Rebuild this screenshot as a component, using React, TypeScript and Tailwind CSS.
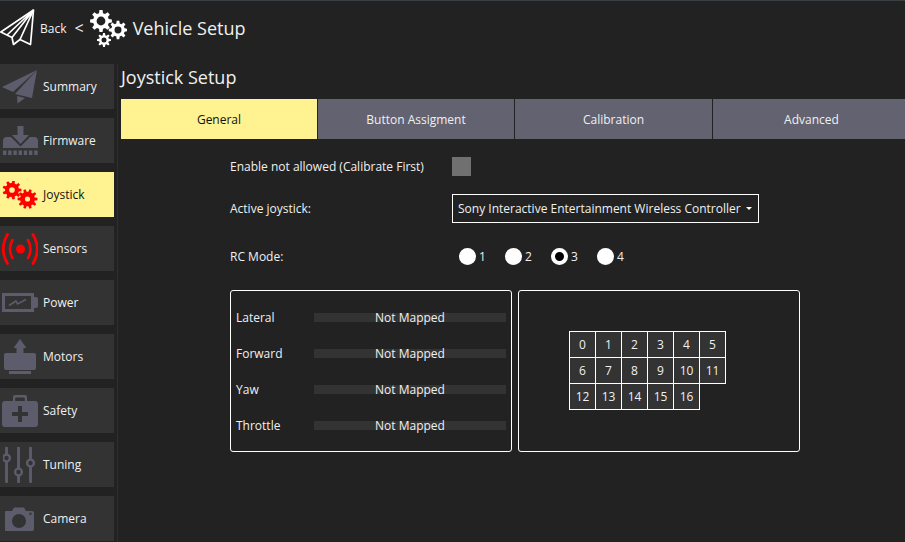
import { ReactNode } from "react";

const SLATE = "#5c5c6c";

function gearPath(cx: number, cy: number, outer: number, inner: number, teeth: number, hole: number) {
    const pts: string[] = [];
    const step = (Math.PI * 2) / teeth;
    for (let i = 0; i < teeth; i++) {
        const a = i * step;
        const corners: [number, number][] = [
            [inner, a - step * 0.32],
            [outer, a - step * 0.18],
            [outer, a + step * 0.18],
            [inner, a + step * 0.32],
        ];
        corners.forEach(([r, t]) => pts.push(`${(cx + r * Math.cos(t)).toFixed(2)} ${(cy + r * Math.sin(t)).toFixed(2)}`));
    }
    const ring = `M${cx - hole} ${cy}a${hole} ${hole} 0 1 0 ${hole * 2} 0a${hole} ${hole} 0 1 0 ${-hole * 2} 0Z`;
    return `M${pts.join("L")}Z${ring}`;
}

function PlaneOutline() {
    return (
        <svg width="36" height="38" viewBox="0 0 36 38" fill="none" stroke="#fff" strokeWidth="1.7" strokeLinejoin="round" className="shrink-0">
            <path d="M33.5 1 L0.8 23 L12 28.5 L13.5 35.5 L20 30.5 L30.5 35.5 Z" />
            <path d="M33.5 1 L12 28.5 M33.5 1 L20 30.5 M33.5 1 L7 26" />
        </svg>
    );
}

function HeaderGears() {
    return (
        <svg width="37" height="37" viewBox="0 0 37 37" fill="#fff" fillRule="evenodd" className="shrink-0">
            <path d={gearPath(11, 11, 11, 8, 8, 4.4)} />
            <path d={gearPath(28, 20, 9.3, 6.8, 8, 3.5)} />
            <path d={gearPath(14, 30, 7, 5, 8, 2.5)} />
        </svg>
    );
}

function SummaryIcon() {
    return (
        <svg width="36" height="34" viewBox="0 0 36 34" fill={SLATE}>
            <path d="M35 0 L0 17 L11 22 Z" />
            <path d="M35 0 L13 24 L30 28 Z" />
            <path d="M15 26 L15.5 33.5 L23 28 Z" />
        </svg>
    );
}

function FirmwareIcon() {
    return (
        <svg width="36" height="30" viewBox="0 0 36 30" fill={SLATE}>
            <path d="M15.5 0 H21.5 V9 H27 L18.5 18 L10 9 H15.5 Z" />
            <path d="M1 15 Q1 11 5 11 H9 L18.5 20.5 L28 11 H32 Q36 11 36 15 V22 H1 Z" />
            {[1, 6.2, 11.4, 16.6, 21.8, 27, 32.2].map(x => (
                <rect key={x} x={x} y="24.5" width="3.4" height="4.5" />
            ))}
        </svg>
    );
}

function JoystickIcon() {
    return (
        <svg width="36" height="28" viewBox="0 0 36 28" fill="#f00" fillRule="evenodd">
            <path d={gearPath(10, 9, 9.5, 7, 9, 2.8)} />
            <path d={gearPath(25.5, 18, 10, 7.4, 10, 2.6)} />
        </svg>
    );
}

function SensorsIcon() {
    return (
        <svg width="36" height="32" viewBox="0 0 36 32" fill="none" stroke="#f00" strokeLinecap="round">
            <circle cx="18.5" cy="16" r="4.5" fill="#f00" stroke="none" />
            <path d="M10.5 7 Q5.5 16 10.5 25" strokeWidth="2.6" />
            <path d="M26 7 Q31 16 26 25" strokeWidth="2.6" />
            <path d="M5.5 1.5 Q-3 16 5.5 30.5" strokeWidth="2.8" />
            <path d="M31 1.5 Q39.5 16 31 30.5" strokeWidth="2.8" />
        </svg>
    );
}

function PowerIcon() {
    return (
        <svg width="36" height="19" viewBox="0 0 36 19" fill="none">
            <rect x="1.5" y="1.5" width="29" height="16" stroke={SLATE} strokeWidth="3" />
            <path d="M32 4 H34 Q36 4 36 6 V13 Q36 15 34 15 H32 Z" fill={SLATE} />
            <path d="M7 12.5 L14 8 L15.5 11 L24 6.5" stroke={SLATE} strokeWidth="1.6" />
        </svg>
    );
}

function MotorsIcon() {
    return (
        <svg width="34" height="36" viewBox="0 0 34 36" fill={SLATE}>
            <path d="M17 0 L23.5 9 H20.5 V15 H13.5 V9 H10.5 Z" />
            <path d="M3 14 H31 Q33 14 33 16 V29 Q33 31 31 31 H3 Q1 31 1 29 V16 Q1 14 3 14 Z" />
            <rect x="6" y="32" width="22" height="3" />
        </svg>
    );
}

function SafetyIcon() {
    return (
        <svg width="36" height="34" viewBox="0 0 36 34" fill={SLATE} fillRule="evenodd">
            <path d="M11 7 V3 Q11 1 13 1 H23 Q25 1 25 3 V7 H22.8 V3.4 H13.2 V7 Z" />
            <path d="M3 7 H33 Q36 7 36 10 V30 Q36 33 33 33 H3 Q0 33 0 30 V10 Q0 7 3 7 Z M16 12 V18 H10 V22 H16 V28 H20 V22 H26 V18 H20 V12 Z" />
        </svg>
    );
}

function TuningIcon() {
    return (
        <svg width="34" height="36" viewBox="0 0 34 36" fill="none" stroke={SLATE}>
            <path d="M3.5 0.5 V35 M15.5 0.5 V35 M27.5 0.5 V35" strokeWidth="2.8" strokeLinecap="round" />
            <circle cx="3.5" cy="11" r="3.4" fill="#333" strokeWidth="2.4" />
            <circle cx="15.5" cy="25" r="3.4" fill="#333" strokeWidth="2.4" />
            <circle cx="27.5" cy="16" r="3.4" fill="#333" strokeWidth="2.4" />
        </svg>
    );
}

function CameraIcon() {
    return (
        <svg width="30" height="24" viewBox="1 0 30 24" fill={SLATE} fillRule="evenodd">
            <path d="M2 4 H8 L10 0.5 H20 L22 4 H28 Q30 4 30 6 V22 Q30 24 28 24 H2 Q0 24 0 22 V6 Q0 4 2 4 Z M15 7 A7 7 0 1 0 15 21 A7 7 0 1 0 15 7 Z M26.5 5.5 A1.2 1.2 0 1 0 26.5 7.9 A1.2 1.2 0 1 0 26.5 5.5 Z" />
            <circle cx="15" cy="14" r="4.8" fill="#333" />
        </svg>
    );
}

function NavButton({ icon, label, active = false }: { icon: ReactNode; label: string; active?: boolean }) {
    return (
        <div className={`h-[45px] w-[114px] shrink-0 flex items-center ${active ? "bg-[#fff291] text-[#111]" : "bg-[#333333] text-[#f0f0f0]"}`}>
            <div className="w-[38px] ml-px mr-[4px] shrink-0 flex items-center justify-center">{icon}</div>
            <span className="text-[12px] leading-none pt-px">{label}</span>
        </div>
    );
}

function Tab({ label, active = false, className = "" }: { label: string; active?: boolean; className?: string }) {
    return (
        <div className={`h-10 pt-px shrink-0 flex items-center justify-center text-[12px] ${active ? "bg-[#fff291] text-[#111]" : "bg-[#626270] text-[#f0f0f0]"} ${className}`}>
            {label}
        </div>
    );
}

function Radio({ label, checked = false }: { label: string; checked?: boolean }) {
    return (
        <div className="w-[46px] flex items-center gap-[3px] text-[12px]">
            {checked ? (
                <span className="w-[17px] h-[17px] rounded-full border-[4px] border-white bg-black" />
            ) : (
                <span className="w-[17px] h-[17px] rounded-full bg-white" />
            )}
            <span className="pt-px">{label}</span>
        </div>
    );
}

function AxisRow({ label }: { label: string }) {
    return (
        <div className="h-9 flex items-center">
            <span className="w-[78px] text-[12px] pt-[2px]">{label}</span>
            <div className="relative w-[192px] h-[9px] bg-[#333333]">
                <span className="absolute inset-0 pt-px flex items-center justify-center text-[12px] whitespace-nowrap">Not Mapped</span>
            </div>
        </div>
    );
}

export default function App() {
    const buttons = Array.from({ length: 17 }, (_, i) => i);

    return (
        <div className="w-[905px] h-[542px] overflow-hidden bg-[#222222] text-[#f0f0f0] flex flex-col border-t border-[#3a3f44] font-['Open_Sans',sans-serif]">
            <header className="h-[55px] shrink-0 flex items-center pb-[1px]">
                <PlaneOutline />
                <span className="ml-[4px] text-[12px] pt-px">Back</span>
                <span className="ml-[8px] text-[16px]">&lt;</span>
                <div className="ml-[6px] mr-[6px]"><HeaderGears /></div>
                <span className="text-[18px] leading-none">Vehicle Setup</span>
            </header>

            <div className="flex flex-1 min-h-0 pt-2">
                <nav className="w-[118px] shrink-0 flex flex-col gap-[9px] border-r border-[#2e2e2e]">
                    <NavButton icon={<SummaryIcon />} label="Summary" />
                    <NavButton icon={<FirmwareIcon />} label="Firmware" />
                    <NavButton icon={<JoystickIcon />} label="Joystick" active />
                    <NavButton icon={<SensorsIcon />} label="Sensors" />
                    <NavButton icon={<PowerIcon />} label="Power" />
                    <NavButton icon={<MotorsIcon />} label="Motors" />
                    <NavButton icon={<SafetyIcon />} label="Safety" />
                    <NavButton icon={<TuningIcon />} label="Tuning" />
                    <NavButton icon={<CameraIcon />} label="Camera" />
                </nav>

                <main className="flex-1 min-w-0 pl-[3px]">
                    <h1 className="h-[35px] text-[18px] leading-[26px]">Joystick Setup</h1>
                    <div className="flex gap-px">
                        <Tab label="General" active className="w-[196px]" />
                        <Tab label="Button Assigment" className="w-[196px]" />
                        <Tab label="Calibration" className="w-[197px]" />
                        <Tab label="Advanced" className="w-[197px]" />
                    </div>

                    <div className="pl-[109px]">
                        <div className="flex items-center h-[19px] mt-[18px]">
                            <span className="w-[222px] text-[12px] pt-px">Enable not allowed (Calibrate First)</span>
                            <div className="w-[19px] h-[19px] bg-[#707070]" />
                        </div>

                        <div className="flex items-center h-[29px] mt-[18px]">
                            <span className="w-[222px] text-[12px] pt-px">Active joystick:</span>
                            <div className="w-[307px] h-[29px] border border-white flex items-center justify-between pl-[5px] pr-[6px] text-[12px] whitespace-nowrap">
                                <span className="pt-px">Sony Interactive Entertainment Wireless Controller</span>
                                <span className="w-0 h-0 border-x-[3.5px] border-x-transparent border-t-[3.5px] border-t-white" />
                            </div>
                        </div>

                        <div className="flex items-center h-[19px] mt-[24px]">
                            <span className="w-[229px] text-[12px] pt-px">RC Mode:</span>
                            <Radio label="1" />
                            <Radio label="2" />
                            <Radio label="3" checked />
                            <Radio label="4" />
                        </div>

                        <div className="flex gap-[6px] mt-[24px]">
                            <section className="w-[282px] h-[162px] border border-white rounded-[3px] pl-[5px] pt-[8px]">
                                <AxisRow label="Lateral" />
                                <AxisRow label="Forward" />
                                <AxisRow label="Yaw" />
                                <AxisRow label="Throttle" />
                            </section>
                            <section className="w-[282px] h-[162px] border border-white rounded-[3px] pl-[50px] pt-[40px]">
                                <div className="grid grid-cols-[repeat(6,26px)] auto-rows-[26px] w-fit pl-px pt-px">
                                    {buttons.map(b => (
                                        <div key={b} className="-ml-px -mt-px w-[27px] h-[27px] border border-white bg-[#333333] flex items-center justify-center text-[12px]">
                                            {b}
                                        </div>
                                    ))}
                                </div>
                            </section>
                        </div>
                    </div>
                </main>
            </div>
        </div>
    );
}
